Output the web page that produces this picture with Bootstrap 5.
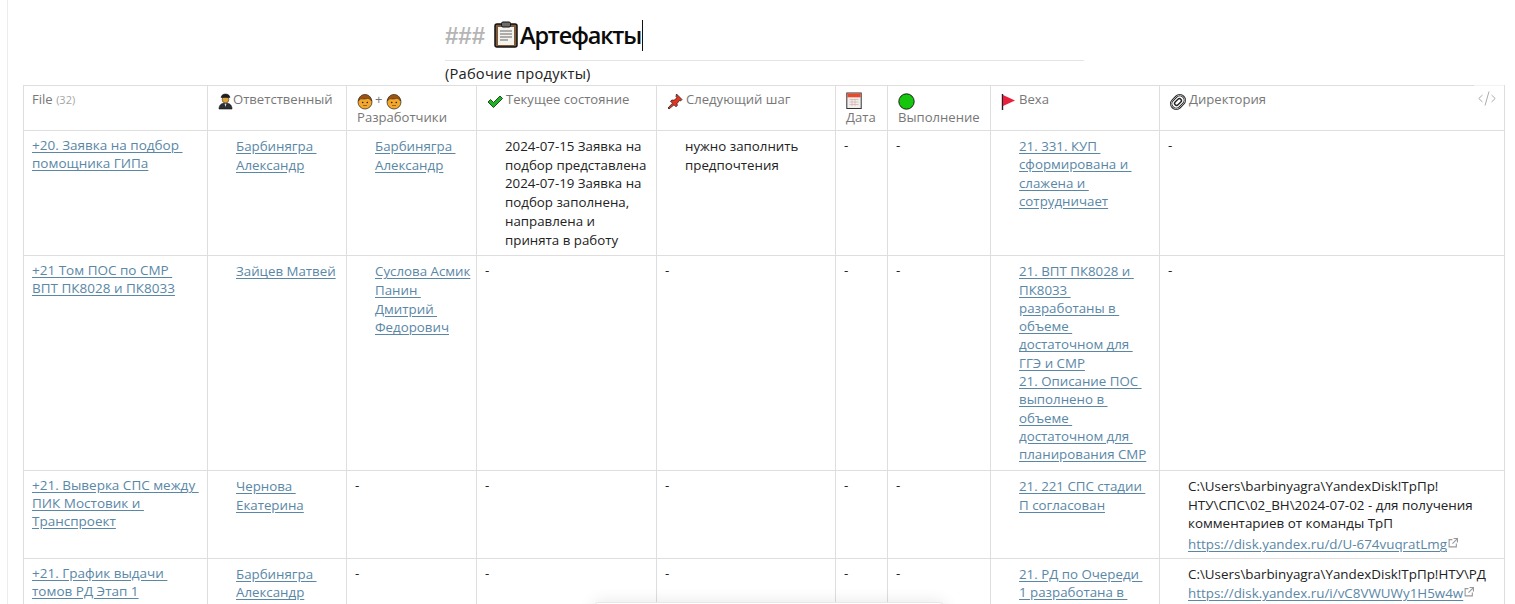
<!DOCTYPE html>
<html lang="ru">
<head>
<meta charset="utf-8">
<title>Артефакты</title>
<link rel="stylesheet" href="https://cdn.jsdelivr.net/npm/bootstrap@5.3.0/dist/css/bootstrap.min.css">
<style>
html,body{height:604px;overflow:hidden;background:#fff}
body{font-family:"Open Sans","Noto Sans",sans-serif;font-size:13.4px;color:#222}
.pane{margin-left:7px;border-left:1px solid #ececec;height:604px;position:relative;overflow:hidden}
.doc-head{margin-left:437px;width:639px}
.h3-line{height:61px;border-bottom:1px solid #e4e4e4;padding-top:20px;font-size:23.5px;line-height:31px;font-weight:600;color:#0b0b0b;letter-spacing:-1.2px;white-space:nowrap}
.hashes{color:#b5b5b5;font-weight:700;font-family:"Liberation Sans",sans-serif;font-size:24px;letter-spacing:0;margin-right:9px}
.clip-ico{margin-top:1px}
.caret-end{border-right:1px solid #111;margin-left:2px;padding-right:1px}
.sub-line{font-size:14.7px;line-height:25px;height:24px;color:#222;letter-spacing:.2px}
.art-table{margin-left:15px;width:1482px;table-layout:fixed;border-collapse:collapse;margin-bottom:0}
.art-table th,.art-table td{border:1px solid #dedede;padding:5px 8px 7px;vertical-align:top;font-weight:400;line-height:18.7px}
.art-table thead th{color:#777;font-size:13.1px;padding-top:4px;padding-bottom:3px;height:45px;line-height:18px}
.art-table thead th:not(:first-child){padding-left:10px}
.c1{width:184px}.c2{width:139px}.c3{width:130px}.c4{width:180px}.c5{width:179px}.c6{width:52px}.c7{width:103px}.c8{width:169px}.c9{width:345px}
.art-table a{color:#5a87a6;text-decoration:underline;text-underline-offset:2px;white-space:pre}
.art-table td{color:#222}
.art-table td.first-link{line-height:18px;font-size:13.5px}
.art-table td.state-cell{padding-bottom:6px}
.plain-list{list-style:none;margin:0;padding:1px 0 0 20px;white-space:pre;font-size:13.3px}
.plain-list li{margin:0}
.goal-list{line-height:18.3px}
.art-table td.dir-cell{padding-bottom:4px;line-height:18.3px}
.dir-text{padding:1px 0 0 20px;white-space:pre}
.dir-link{display:block;padding-top:1px}
.dir-link-gap{padding-top:3px}
.cnt{color:#a5a5a5;font-size:11px}
.ico{display:inline-block;vertical-align:-3px;margin:-5px 2px -3px 0}
.ico-lead{margin-right:0}
.ico-check{vertical-align:-1px;margin-right:3px}
.ico-wide{margin-right:3px}
.plus-sign{margin:0 3px 0 2px}
.ext{display:inline-block;vertical-align:1px;margin-left:1px}
.code-tag{position:absolute;left:1470px;top:91px;line-height:0}
.code-mask{position:absolute;left:1466px;top:84px;width:30px;height:3px;background:rgba(255,255,255,.6)}
.float-panel{position:absolute;left:585px;top:602px;width:352px;height:30px;background:#fff;border:1px solid #e8e8e8;border-radius:6px 6px 0 0;box-shadow:0 0 16px rgba(0,0,0,.1)}
</style>
</head>
<body>
<svg width="0" height="0" class="d-none">
<symbol id="face" viewBox="0 0 16 16"><circle cx="8" cy="8.500" r="7" fill="#f4a72a" stroke="#222" stroke-width=".7"/><path d="M1.500 7.500C2 2.500 5 1 8 1s6 1.500 6.500 6.500C13 5.500 11.500 4.500 10 5 7.500 6 4 5 3 5.500 2.500 6 2 7 1.500 7.500z" fill="#9c5215" stroke="#222" stroke-width=".5"/><circle cx="5.700" cy="9" r=".8" fill="#222"/><circle cx="10.300" cy="9" r=".8" fill="#222"/><path d="M6 12h4" stroke="#7a4a10" stroke-width=".7"/></symbol>
</svg>
<div class="pane">
  <div class="doc-head">
    <div class="h3-line d-flex align-items-start"><span class="hashes">###</span><svg class="clip-ico" width="24" height="27" viewBox="0 0 24 27"><rect x="1" y="3" width="22" height="23" rx="2" fill="#7d5a3a" stroke="#111" stroke-width="1.500"/><rect x="4" y="6" width="16" height="18" fill="#f5f3ee"/><rect x="7.500" y="1" width="9" height="5" rx="1.500" fill="#6b6b6b" stroke="#111"/><path d="M6 10h12M6 13h12M6 16h12M6 19h8" stroke="#666" stroke-width="1.200"/></svg><span class="caret-end">Артефакты</span></div>
    <div class="sub-line">(Рабочие продукты)</div>
  </div>
  <table class="art-table">
    <colgroup><col class="c1"><col class="c2"><col class="c3"><col class="c4"><col class="c5"><col class="c6"><col class="c7"><col class="c8"><col class="c9"></colgroup>
    <thead>
      <tr>
        <th>File <span class="cnt">(32)</span></th>
        <th><svg class="ico ico-lead" width="15" height="17" viewBox="0 0 15 17"><path d="M1 16c0-4 2.500-6 6.500-6s6.500 2 6.500 6z" fill="#2b2f33" stroke="#111" stroke-width=".6"/><path d="M6.500 10.500 7.500 14l1-3.500" fill="#ddd"/><circle cx="7.500" cy="6.500" r="3.400" fill="#e0a33a" stroke="#222" stroke-width=".5"/><path d="M3 4.500C3.500 1.500 6 1 7.500 1s4 .5 4.500 3.500z" fill="#1d1f22" stroke="#111" stroke-width=".5"/></svg>Ответственный</th>
        <th><svg class="ico ico-lead" width="16" height="17"><use href="#face"/></svg><span class="plus-sign">+</span><svg class="ico ico-lead" width="16" height="17"><use href="#face"/></svg><br>Разработчики</th>
        <th><svg class="ico ico-check" width="16" height="13" viewBox="0 0 16 13"><path d="M1 7l2.500-2.500 3 3L13 1l2.500 2.500-9 9z" fill="#1fb321" stroke="#173d17" stroke-width=".9" stroke-linejoin="round"/></svg>Текущее состояние</th>
        <th><svg class="ico ico-wide" width="16" height="17" viewBox="0 0 16 17"><path d="M9.500 1l5.500 5.500-1.500 1.500-1-.5-2.500 3 .3 2-1.300 1.300-2-2L2 16l-1-1 4.500-4.800-2-2L5 7l2 .3 3-2.500L9 3.500z" fill="#e8341f" stroke="#222" stroke-width=".8" stroke-linejoin="round"/></svg>Следующий шаг</th>
        <th><svg class="ico" width="16" height="18" viewBox="0 0 16 18"><rect x=".8" y="1" width="14.400" height="15.500" fill="#f1efee" stroke="#333" stroke-width="1"/><rect x="1.300" y="1.500" width="13.400" height="3.800" fill="#e74a2c"/><path d="M3.500 7.500h9M3.500 10h9M3.500 12.500h9M6 7v7M9 7v7" stroke="#d9b5b0" stroke-width=".8"/></svg><br>Дата</th>
        <th><svg class="ico" width="17" height="17" viewBox="0 0 17 17"><circle cx="8.500" cy="8.500" r="7.700" fill="#16c60c" stroke="#111" stroke-width=".9"/></svg><br>Выполнение</th>
        <th><svg class="ico ico-wide" width="15" height="16" viewBox="0 0 15 16"><path d="M1.500 0v16" stroke="#222" stroke-width="1.400"/><path d="M2 1l12 5.500L2 12z" fill="#ea1f3d"/></svg>Веха</th>
        <th><svg class="ico ico-wide" width="16" height="16" viewBox="0 0 16 16"><g fill="none" transform="rotate(-45 8 8)"><rect x=".5" y="3" width="15" height="10" rx="5" stroke="#222" stroke-width="2.400"/><rect x=".5" y="3" width="15" height="10" rx="5" stroke="#ccc" stroke-width=".8"/><rect x="4" y="6" width="8" height="4" rx="2" stroke="#222" stroke-width="1.400"/></g></svg>Директория</th>
      </tr>
    </thead>
    <tbody>
      <tr>
        <td class="first-link"><a href="#">+20. Заявка на подбор <br>помощника ГИПа</a></td>
        <td><ul class="plain-list"><li><a href="#">Барбинягра <br>Александр</a></li></ul></td>
        <td><ul class="plain-list"><li><a href="#">Барбинягра <br>Александр</a></li></ul></td>
        <td class="state-cell"><ul class="plain-list"><li>2024-07-15 Заявка на<br>подбор представлена</li><li>2024-07-19 Заявка на<br>подбор заполнена,<br>направлена и<br>принята в работу</li></ul></td>
        <td><ul class="plain-list"><li>нужно заполнить<br>предпочтения</li></ul></td>
        <td>-</td><td>-</td>
        <td><ul class="plain-list goal-list"><li><a href="#">21. 331. КУП <br>сформирована и <br>слажена и <br>сотрудничает</a></li></ul></td>
        <td>-</td>
      </tr>
      <tr>
        <td class="first-link"><a href="#">+21 Том ПОС по СМР <br>ВПТ ПК8028 и ПК8033</a></td>
        <td><ul class="plain-list"><li><a href="#">Зайцев Матвей</a></li></ul></td>
        <td><ul class="plain-list"><li><a href="#">Суслова Асмик</a></li><li><a href="#">Панин <br>Дмитрий <br>Федорович</a></li></ul></td>
        <td>-</td><td>-</td><td>-</td><td>-</td>
        <td><ul class="plain-list goal-list"><li><a href="#">21. ВПТ ПК8028 и <br>ПК8033 <br>разработаны в <br>объеме <br>достаточном для <br>ГГЭ и СМР</a></li><li><a href="#">21. Описание ПОС <br>выполнено в <br>объеме <br>достаточном для <br>планирования СМР</a></li></ul></td>
        <td>-</td>
      </tr>
      <tr>
        <td class="first-link"><a href="#">+21. Выверка СПС между <br>ПИК Мостовик и <br>Транспроект</a></td>
        <td><ul class="plain-list"><li><a href="#">Чернова <br>Екатерина</a></li></ul></td>
        <td>-</td><td>-</td><td>-</td><td>-</td><td>-</td>
        <td><ul class="plain-list goal-list"><li><a href="#">21. 221 СПС стадии <br>П согласован</a></li></ul></td>
        <td class="dir-cell"><div class="dir-text">C:\Users\barbinyagra\YandexDisk!ТрПр!<br>НТУ\СПС\02_ВН\2024-07-02 - для получения<br>комментариев от команды ТрП<span class="dir-link dir-link-gap"><a href="#">https://disk.yandex.ru/d/U-674vuqratLmg</a><svg class="ext" width="10" height="10" viewBox="0 0 9 9" fill="none" stroke="#999"><path d="M4 1.500H1v6.500h6.500V5M5 .5h3.500V4M8.500.5 4 5"/></svg></span></div></td>
      </tr>
      <tr>
        <td class="first-link"><a href="#">+21. График выдачи <br>томов РД Этап 1</a></td>
        <td><ul class="plain-list"><li><a href="#">Барбинягра <br>Александр</a></li></ul></td>
        <td>-</td><td>-</td><td>-</td><td>-</td><td>-</td>
        <td><ul class="plain-list goal-list"><li><a href="#">21. РД по Очереди <br>1 разработана в </a></li></ul></td>
        <td class="dir-cell"><div class="dir-text">C:\Users\barbinyagra\YandexDisk!ТрПр!НТУ\РД<span class="dir-link"><a href="#">https://disk.yandex.ru/i/vC8VWUWy1H5w4w</a><svg class="ext" width="10" height="10" viewBox="0 0 9 9" fill="none" stroke="#999"><path d="M4 1.500H1v6.500h6.500V5M5 .5h3.500V4M8.500.5 4 5"/></svg></span></div></td>
      </tr>
    </tbody>
  </table>
  <div class="code-mask"></div>
  <div class="code-tag"><svg width="18" height="15" viewBox="0 0 18 15" fill="none" stroke="#aaa" stroke-width="1"><path d="M4.500 4 .8 7.500l3.700 3.500M13.500 4l3.700 3.500-3.700 3.500M11 .5 7 14.500"/></svg></div>
  <div class="float-panel"></div>
</div>
<script src="https://cdn.jsdelivr.net/npm/bootstrap@5.3.0/dist/js/bootstrap.bundle.min.js"></script>
</body>
</html>
